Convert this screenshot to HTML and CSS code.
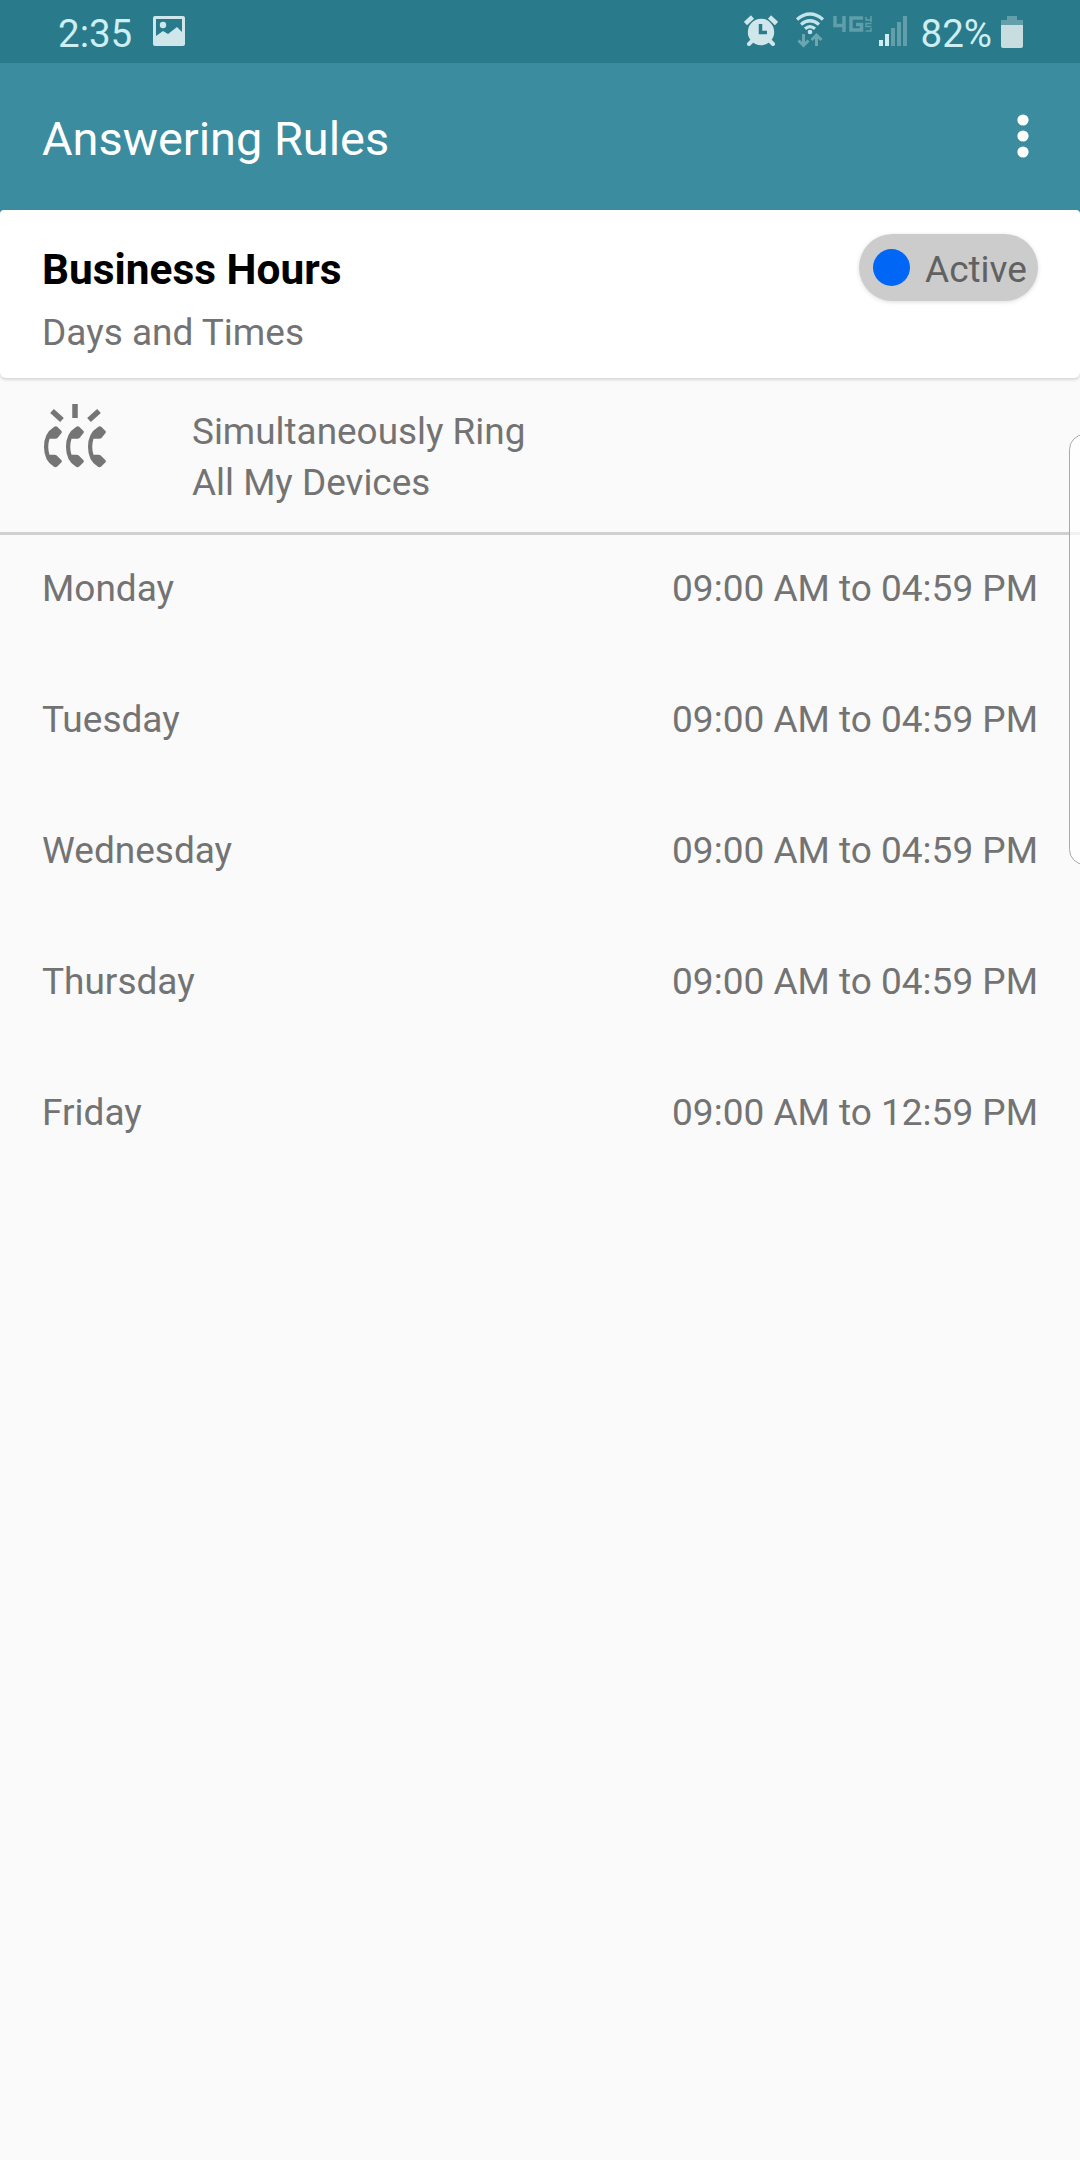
FILE: index.html
```html
<!DOCTYPE html>
<html lang="en">
<head>
<meta charset="utf-8">
<title>Answering Rules</title>
<link rel="stylesheet" href="styles.css">
</head>
<body>
<div class="screen">
  <div class="status-bar">
    <span class="clock">2:35</span>
    <svg class="picture-icon" width="32" height="30" viewBox="0 0 32 30"><path fill="#cfe6ea" fill-rule="evenodd" d="M2 0h28q2 0 2 2v26q0 2-2 2H2q-2 0-2-2V2q0-2 2-2zM3 3v17l7-5 5 3 9-7 5 5V3z"/><circle cx="10" cy="9" r="3.200" fill="#cfe6ea"/></svg>
    <div class="status-right">
      <svg class="alarm-icon" width="34" height="32" viewBox="0 0 34 32"><g stroke="#cfe6ea" fill="none"><path stroke-width="4.500" d="M1.500 8.500l7-6.500M32.500 8.500L25.500 2"/><path stroke-width="4" stroke-linecap="round" d="M9 25l-4 4M25 25l4 4"/></g><circle cx="17" cy="17" r="13.200" fill="#cfe6ea"/><path d="M16.500 9v8.500H23" fill="none" stroke="#297a8a" stroke-width="3.500"/></svg>
      <svg class="wifi-icon" width="30" height="36" viewBox="0 0 30 36"><g fill="none" stroke="#c3e4ea" stroke-width="3.200"><path d="M2 7.500Q15-3.500 28 7.500"/><path d="M6 12.500Q15 5 24 12.500"/><path d="M10 16.800Q15 12.500 20 16.800"/></g><circle cx="15" cy="20" r="2.300" fill="#c3e4ea"/><path d="M8.500 22v11M3.500 28.500l5 5 5-5M21.500 34V23M16.500 28l5-5 5 5" fill="none" stroke="#6ba6b1" stroke-width="3"/></svg>
      <svg class="network-icon" width="39" height="17" viewBox="0 0 39 17"><g fill="none" stroke="#5f9eaa" stroke-width="3.500"><path d="M2 0v9.500h10M11 0v16M30 2H18v12h10.500V8.500H23"/><path stroke-width="1.500" d="M33 1v3h5.500M38 0v6M38.500 7.500H33v3h5.500M38 12v3h-5.500"/></g></svg>
      <svg class="signal-icon" width="28" height="30" viewBox="0 0 28 30"><path fill="#cfecf0" d="M0 24h4v6H0zM6 18h4v12H6z"/><path fill="#629fab" d="M12 12h4v18h-4zM18 6h4v24h-4zM24 0h4v30h-4z"/></svg>
      <span class="battery-level">82%</span>
      <svg class="battery-icon" width="22" height="32" viewBox="0 0 22 32"><path fill="#629fab" d="M6 0h10v4h6v6H0V4h6z"/><path fill="#c8dde0" d="M0 9h22v21q0 2-2 2H2q-2 0-2-2z"/></svg>
    </div>
  </div>
  <header class="app-bar">
    <h1 class="title">Answering Rules</h1>
    <svg class="menu-icon" width="12" height="44" viewBox="0 0 12 44" fill="#fff"><circle cx="6" cy="6" r="5.600"/><circle cx="6" cy="22" r="5.600"/><circle cx="6" cy="38" r="5.600"/></svg>
  </header>
  <div class="card-wrap">
    <section class="rule-card">
      <div>
        <h2 class="rule-name">Business Hours</h2>
        <p class="rule-subtitle">Days and Times</p>
      </div>
      <div class="active-chip"><span class="dot"></span><span class="chip-label">Active</span></div>
    </section>
  </div>
  <section class="ring-mode">
    <svg class="ring-icon" width="64" height="68" viewBox="0 0 64 68"><g fill="none" stroke="#757575" stroke-width="5.500"><path d="M32 1v14M9 8l10 9M56 8l-10 9"/></g><g fill="#757575"><path d="M11 24q2-1.500 3.500 0l4 4q.8 1 0 2l-4 5q-1 1-3 .7H6.500q-2.500 8 0 16h5q1.500 0 2.500 1l4.500 4.500q.8 1 0 2l-4 4q-1.800 1.700-3.500.5Q1 58 1 44T11 24z"/><path transform="translate(22)" d="M11 24q2-1.500 3.500 0l4 4q.8 1 0 2l-4 5q-1 1-3 .7H6.500q-2.500 8 0 16h5q1.500 0 2.500 1l4.500 4.500q.8 1 0 2l-4 4q-1.800 1.700-3.500.5Q1 58 1 44T11 24z"/><path transform="translate(44)" d="M11 24q2-1.500 3.500 0l4 4q.8 1 0 2l-4 5q-1 1-3 .7H6.500q-2.500 8 0 16h5q1.500 0 2.500 1l4.500 4.500q.8 1 0 2l-4 4q-1.800 1.700-3.500.5Q1 58 1 44T11 24z"/></g></svg>
    <p class="ring-text">Simultaneously Ring<br>All My Devices</p>
  </section>
  <ul class="hours">
    <li class="day"><span>Monday</span><span>09:00 AM to 04:59 PM</span></li>
    <li class="day"><span>Tuesday</span><span>09:00 AM to 04:59 PM</span></li>
    <li class="day"><span>Wednesday</span><span>09:00 AM to 04:59 PM</span></li>
    <li class="day"><span>Thursday</span><span>09:00 AM to 04:59 PM</span></li>
    <li class="day"><span>Friday</span><span>09:00 AM to 12:59 PM</span></li>
  </ul>
  <div class="edge-handle"></div>
</div>
</body>
</html>
```
FILE: styles.css
```css
* { box-sizing: border-box; }
body, h1, h2, p, ul { margin: 0; padding: 0; }
body {
  background: #fafafa;
  color: #737373;
  font-family: Roboto, sans-serif;
  font-size: 37px;
}
.screen {
  position: relative;
  width: 1080px;
  height: 2160px;
  overflow: hidden;
  background: #fafafa;
}
.status-bar {
  display: flex;
  align-items: flex-start;
  height: 63px;
  padding: 0 57px 0 58px;
  background: #297a8a;
  color: #cdeef3;
  font-size: 38.5px;
  line-height: 68px;
}
.picture-icon { margin: 16px 0 0 21px; }
.status-right { display: flex; align-items: flex-start; margin-left: auto; }
.alarm-icon { margin: 15px 17px 0 0; }
.wifi-icon { margin: 12px 8px 0 0; }
.network-icon { margin: 16px 7px 0 0; }
.signal-icon { margin: 16px 14px 0 0; }
.battery-icon { margin: 16px 0 0 9px; }
.app-bar {
  display: flex;
  align-items: center;
  justify-content: space-between;
  height: 147px;
  padding: 0 51px 0 42px;
  background: #3b8c9f;
  color: #fff;
}
.title { font-size: 46.9px; font-weight: 400; line-height: 56px; padding-top: 4px; }
.menu-icon { margin-bottom: 1px; }
.card-wrap { background: linear-gradient(#3b8c9f 0 6px, #fafafa 6px); }
.rule-card {
  display: flex;
  justify-content: space-between;
  height: 168px;
  padding: 24px 42px 0;
  border-radius: 4px 4px 6px 6px;
  background: #fff;
  box-shadow: 0 2px 3px rgba(0, 0, 0, .14);
}
.rule-name { color: #000; font-size: 42.4px; font-weight: 700; line-height: 72px; }
.rule-subtitle { line-height: 53px; }
.active-chip {
  display: flex;
  align-items: center;
  width: 179px;
  height: 67px;
  padding-left: 14px;
  border-radius: 34px;
  background: #ccc;
  color: #616161;
  line-height: 68px;
  box-shadow: 0 1px 4px rgba(0, 0, 0, .14);
}
.chip-label { padding-top: 4px; }
.dot {
  width: 37px;
  height: 37px;
  margin: 0 15px 1px 0;
  border-radius: 50%;
  background: #0066f5;
}
.ring-mode {
  display: flex;
  height: 157px;
  padding: 25px 42px 0 43px;
  border-bottom: 3px solid #d0d0d0;
}
.ring-icon { margin-right: 85px; }
.ring-text { font-size: 36.9px; line-height: 51px; padding-top: 3px; }
.hours { list-style: none; display: grid; gap: 87px; padding: 32px 42px 0; }
.day { display: flex; justify-content: space-between; line-height: 44px; }
.edge-handle {
  position: absolute;
  top: 434px;
  right: -20px;
  width: 31px;
  height: 431px;
  border: 1px solid #aaa;
  border-radius: 16px;
  background: rgba(255, 255, 255, .7);
}
```
